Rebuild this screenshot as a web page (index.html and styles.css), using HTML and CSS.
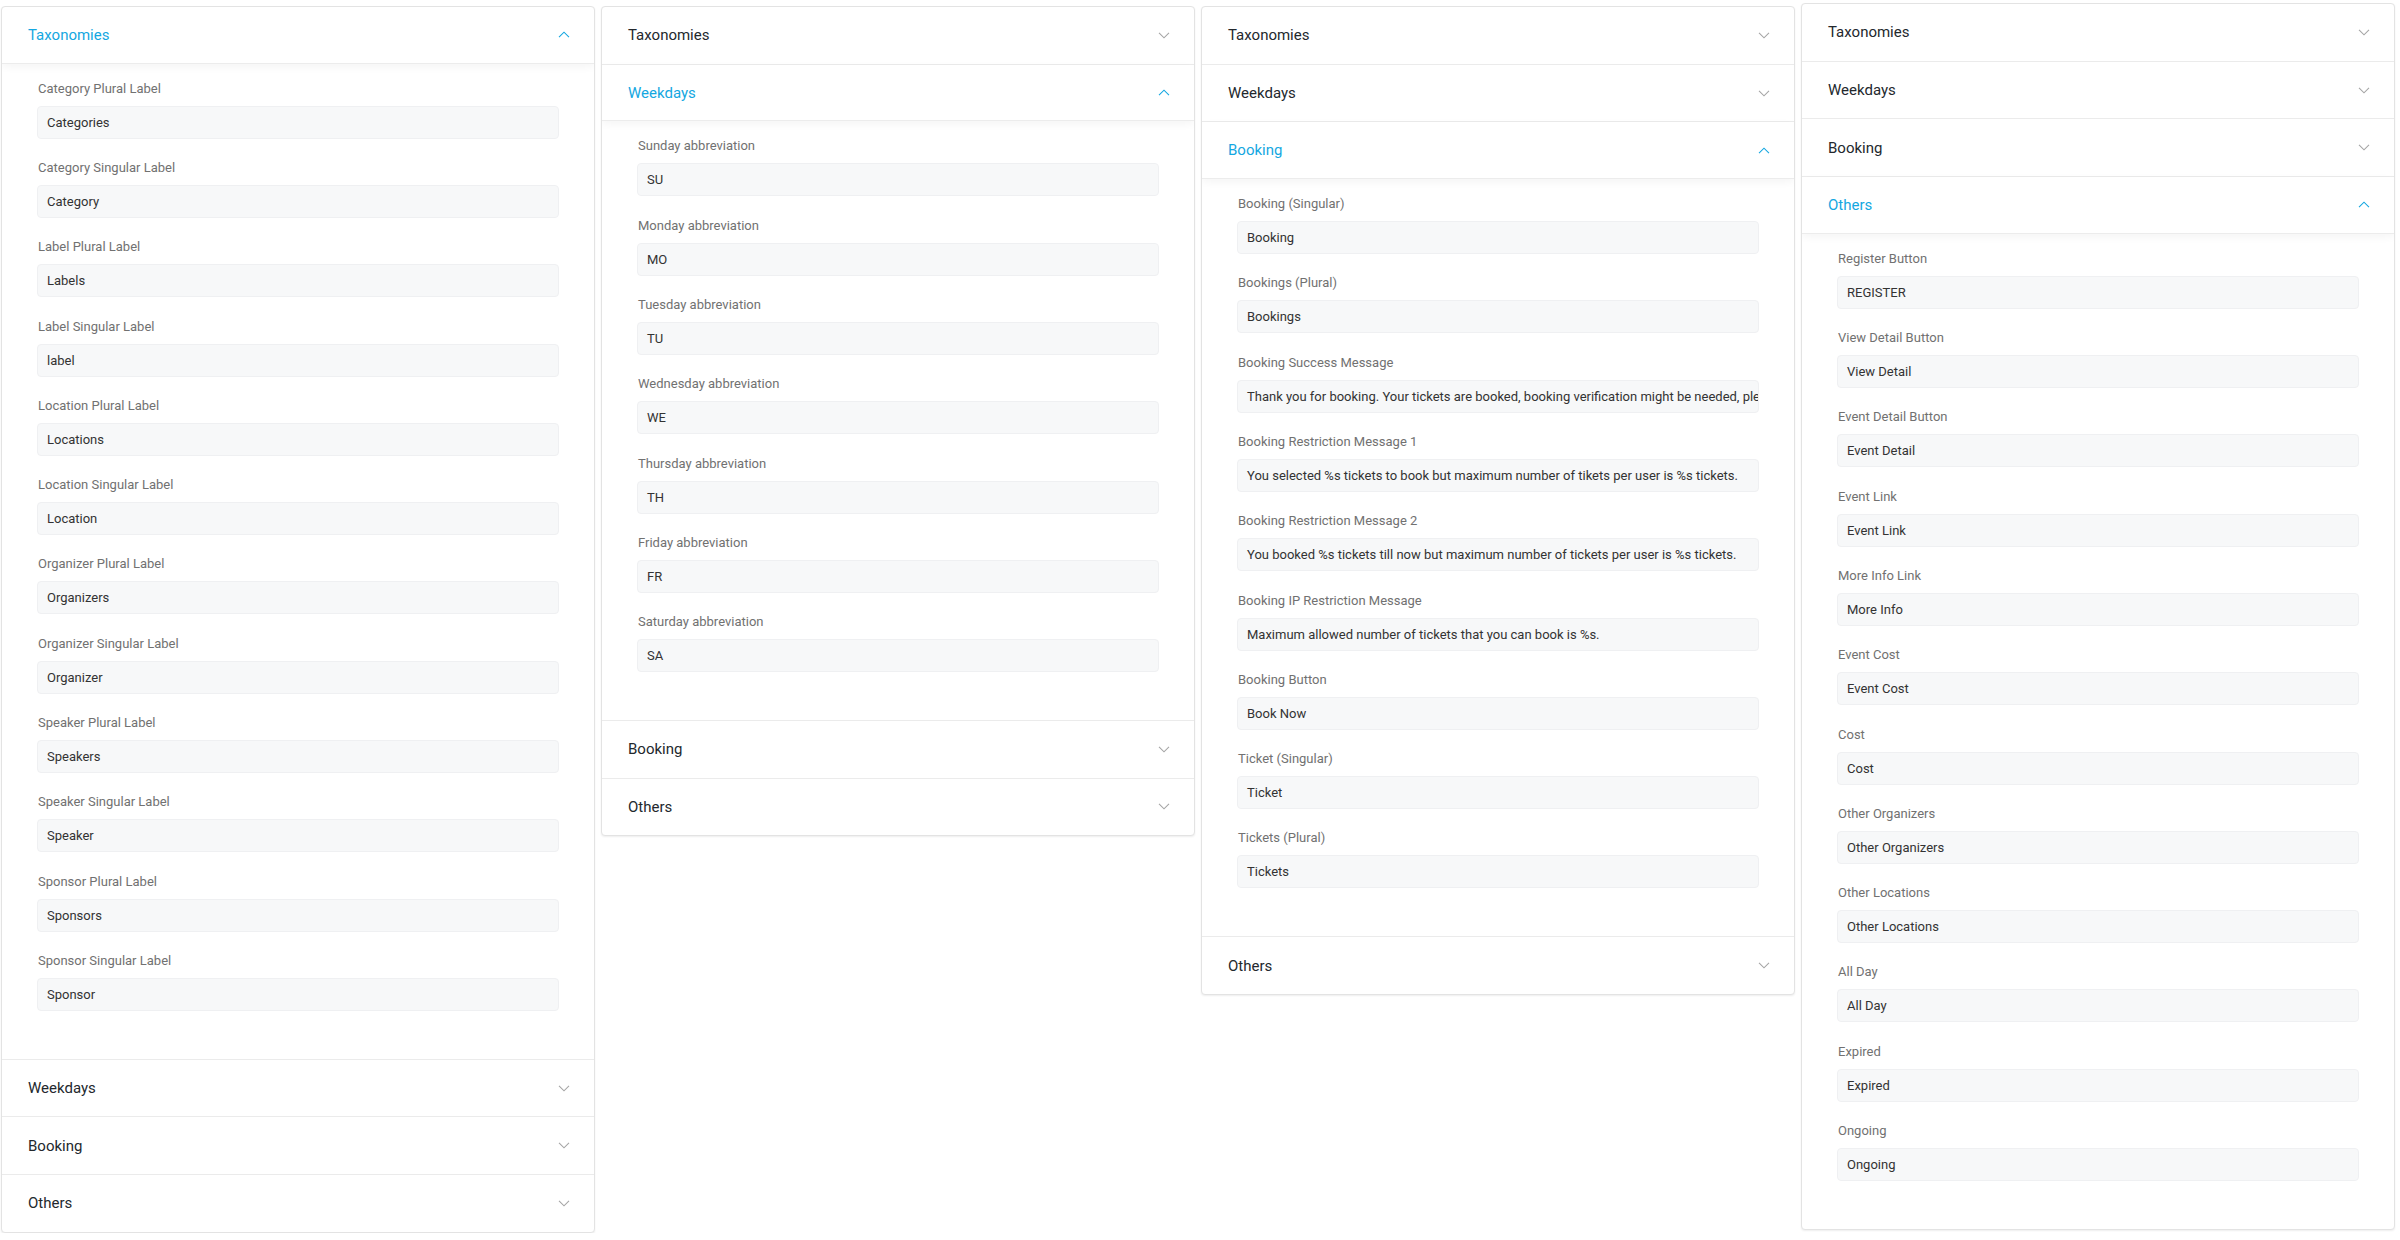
FILE: index.html
```html
<!DOCTYPE html>
<html lang="en">
<head>
<meta charset="utf-8">
<title>Labels settings</title>
<link rel="stylesheet" href="styles.css">
</head>
<body>
<div class="board">

  <!-- Panel 1: Taxonomies open -->
  <section class="acc">
    <div class="acc-item open">
      <div class="acc-head"><span class="acc-title">Taxonomies</span><svg class="chev" viewBox="0 0 12 7"><path d="M1 6.2 L6 1.2 L11 6.2"/></svg></div>
      <div class="acc-body">
        <div class="field"><label class="field-label">Category Plural Label</label><div class="field-input">Categories</div></div>
        <div class="field"><label class="field-label">Category Singular Label</label><div class="field-input">Category</div></div>
        <div class="field"><label class="field-label">Label Plural Label</label><div class="field-input">Labels</div></div>
        <div class="field"><label class="field-label">Label Singular Label</label><div class="field-input">label</div></div>
        <div class="field"><label class="field-label">Location Plural Label</label><div class="field-input">Locations</div></div>
        <div class="field"><label class="field-label">Location Singular Label</label><div class="field-input">Location</div></div>
        <div class="field"><label class="field-label">Organizer Plural Label</label><div class="field-input">Organizers</div></div>
        <div class="field"><label class="field-label">Organizer Singular Label</label><div class="field-input">Organizer</div></div>
        <div class="field"><label class="field-label">Speaker Plural Label</label><div class="field-input">Speakers</div></div>
        <div class="field"><label class="field-label">Speaker Singular Label</label><div class="field-input">Speaker</div></div>
        <div class="field"><label class="field-label">Sponsor Plural Label</label><div class="field-input">Sponsors</div></div>
        <div class="field"><label class="field-label">Sponsor Singular Label</label><div class="field-input">Sponsor</div></div>
      </div>
    </div>
    <div class="acc-item"><div class="acc-head"><span class="acc-title">Weekdays</span><svg class="chev" viewBox="0 0 12 7"><path d="M1 0.8 L6 5.8 L11 0.8"/></svg></div></div>
    <div class="acc-item"><div class="acc-head"><span class="acc-title">Booking</span><svg class="chev" viewBox="0 0 12 7"><path d="M1 0.8 L6 5.8 L11 0.8"/></svg></div></div>
    <div class="acc-item"><div class="acc-head"><span class="acc-title">Others</span><svg class="chev" viewBox="0 0 12 7"><path d="M1 0.8 L6 5.8 L11 0.8"/></svg></div></div>
  </section>

  <!-- Panel 2: Weekdays open -->
  <section class="acc">
    <div class="acc-item"><div class="acc-head"><span class="acc-title">Taxonomies</span><svg class="chev" viewBox="0 0 12 7"><path d="M1 0.8 L6 5.8 L11 0.8"/></svg></div></div>
    <div class="acc-item open">
      <div class="acc-head"><span class="acc-title">Weekdays</span><svg class="chev" viewBox="0 0 12 7"><path d="M1 6.2 L6 1.2 L11 6.2"/></svg></div>
      <div class="acc-body">
        <div class="field"><label class="field-label">Sunday abbreviation</label><div class="field-input">SU</div></div>
        <div class="field"><label class="field-label">Monday abbreviation</label><div class="field-input">MO</div></div>
        <div class="field"><label class="field-label">Tuesday abbreviation</label><div class="field-input">TU</div></div>
        <div class="field"><label class="field-label">Wednesday abbreviation</label><div class="field-input">WE</div></div>
        <div class="field"><label class="field-label">Thursday abbreviation</label><div class="field-input">TH</div></div>
        <div class="field"><label class="field-label">Friday abbreviation</label><div class="field-input">FR</div></div>
        <div class="field"><label class="field-label">Saturday abbreviation</label><div class="field-input">SA</div></div>
      </div>
    </div>
    <div class="acc-item"><div class="acc-head"><span class="acc-title">Booking</span><svg class="chev" viewBox="0 0 12 7"><path d="M1 0.8 L6 5.8 L11 0.8"/></svg></div></div>
    <div class="acc-item"><div class="acc-head"><span class="acc-title">Others</span><svg class="chev" viewBox="0 0 12 7"><path d="M1 0.8 L6 5.8 L11 0.8"/></svg></div></div>
  </section>

  <!-- Panel 3: Booking open -->
  <section class="acc">
    <div class="acc-item"><div class="acc-head"><span class="acc-title">Taxonomies</span><svg class="chev" viewBox="0 0 12 7"><path d="M1 0.8 L6 5.8 L11 0.8"/></svg></div></div>
    <div class="acc-item"><div class="acc-head"><span class="acc-title">Weekdays</span><svg class="chev" viewBox="0 0 12 7"><path d="M1 0.8 L6 5.8 L11 0.8"/></svg></div></div>
    <div class="acc-item open">
      <div class="acc-head"><span class="acc-title">Booking</span><svg class="chev" viewBox="0 0 12 7"><path d="M1 6.2 L6 1.2 L11 6.2"/></svg></div>
      <div class="acc-body">
        <div class="field"><label class="field-label">Booking (Singular)</label><div class="field-input">Booking</div></div>
        <div class="field"><label class="field-label">Bookings (Plural)</label><div class="field-input">Bookings</div></div>
        <div class="field"><label class="field-label">Booking Success Message</label><div class="field-input">Thank you for booking. Your tickets are booked, booking verification might be needed, please check your email.</div></div>
        <div class="field"><label class="field-label">Booking Restriction Message 1</label><div class="field-input">You selected %s tickets to book but maximum number of tikets per user is %s tickets.</div></div>
        <div class="field"><label class="field-label">Booking Restriction Message 2</label><div class="field-input">You booked %s tickets till now but maximum number of tickets per user is %s tickets.</div></div>
        <div class="field"><label class="field-label">Booking IP Restriction Message</label><div class="field-input">Maximum allowed number of tickets that you can book is %s.</div></div>
        <div class="field"><label class="field-label">Booking Button</label><div class="field-input">Book Now</div></div>
        <div class="field"><label class="field-label">Ticket (Singular)</label><div class="field-input">Ticket</div></div>
        <div class="field"><label class="field-label">Tickets (Plural)</label><div class="field-input">Tickets</div></div>
      </div>
    </div>
    <div class="acc-item"><div class="acc-head"><span class="acc-title">Others</span><svg class="chev" viewBox="0 0 12 7"><path d="M1 0.8 L6 5.8 L11 0.8"/></svg></div></div>
  </section>

  <!-- Panel 4: Others open -->
  <section class="acc acc-raised">
    <div class="acc-item"><div class="acc-head"><span class="acc-title">Taxonomies</span><svg class="chev" viewBox="0 0 12 7"><path d="M1 0.8 L6 5.8 L11 0.8"/></svg></div></div>
    <div class="acc-item"><div class="acc-head"><span class="acc-title">Weekdays</span><svg class="chev" viewBox="0 0 12 7"><path d="M1 0.8 L6 5.8 L11 0.8"/></svg></div></div>
    <div class="acc-item"><div class="acc-head"><span class="acc-title">Booking</span><svg class="chev" viewBox="0 0 12 7"><path d="M1 0.8 L6 5.8 L11 0.8"/></svg></div></div>
    <div class="acc-item open">
      <div class="acc-head"><span class="acc-title">Others</span><svg class="chev" viewBox="0 0 12 7"><path d="M1 6.2 L6 1.2 L11 6.2"/></svg></div>
      <div class="acc-body">
        <div class="field"><label class="field-label">Register Button</label><div class="field-input">REGISTER</div></div>
        <div class="field"><label class="field-label">View Detail Button</label><div class="field-input">View Detail</div></div>
        <div class="field"><label class="field-label">Event Detail Button</label><div class="field-input">Event Detail</div></div>
        <div class="field"><label class="field-label">Event Link</label><div class="field-input">Event Link</div></div>
        <div class="field"><label class="field-label">More Info Link</label><div class="field-input">More Info</div></div>
        <div class="field"><label class="field-label">Event Cost</label><div class="field-input">Event Cost</div></div>
        <div class="field"><label class="field-label">Cost</label><div class="field-input">Cost</div></div>
        <div class="field"><label class="field-label">Other Organizers</label><div class="field-input">Other Organizers</div></div>
        <div class="field"><label class="field-label">Other Locations</label><div class="field-input">Other Locations</div></div>
        <div class="field"><label class="field-label">All Day</label><div class="field-input">All Day</div></div>
        <div class="field"><label class="field-label">Expired</label><div class="field-input">Expired</div></div>
        <div class="field"><label class="field-label">Ongoing</label><div class="field-input">Ongoing</div></div>
      </div>
    </div>
  </section>

</div>
</body>
</html>
```

FILE: styles.css
```css
* { box-sizing: border-box; }

html, body {
  margin: 0;
  padding: 0;
  background: #ffffff;
}

body {
  font-family: Roboto, "Liberation Sans", Arial, sans-serif;
  color: #222;
}

.board {
  display: flex;
  align-items: flex-start;
  gap: 6px;
  padding: 3px 0 0 1px;
}

.acc {
  width: 594px;
  flex: 0 0 594px;
  margin-top: 3px;
  background: #fff;
  border: 1px solid #e3e3e3;
  border-radius: 4px;
  box-shadow: 0 1px 2px rgba(0, 0, 0, 0.07);
  overflow: hidden;
}

.acc-raised {
  margin-top: 0;
}

.acc-item {
  border-bottom: 1px solid #ebebeb;
}

.acc-item:last-child {
  border-bottom: none;
}

.acc-head {
  height: 56.7px;
  display: flex;
  align-items: center;
  justify-content: space-between;
  padding: 0 24px 0 26px;
}

.acc-title {
  font-size: 15px;
  color: #23282d;
}

.chev {
  width: 12px;
  height: 7px;
  fill: none;
  stroke: #a5a5a5;
  stroke-width: 1.1;
}

.open .acc-head {
  border-bottom: 1px solid #ececec;
  box-shadow: 0 3px 8px rgba(0, 0, 0, 0.045);
}

.open .acc-title {
  color: #14a7e1;
}

.open .chev {
  stroke: #14a7e1;
}

.acc-body {
  padding: 15px 35px 28.5px 35px;
}

.field {
  margin-bottom: 19.3px;
}

.field-label {
  display: block;
  font-size: 13px;
  line-height: 20px;
  color: #717171;
  padding-left: 1px;
  margin-bottom: 7px;
}

.field-input {
  height: 33px;
  line-height: 31px;
  padding: 0 9px;
  font-size: 13px;
  color: #333;
  background: #f7f8f9;
  border: 1px solid #eff0f2;
  border-radius: 4px;
  white-space: nowrap;
  overflow: hidden;
}
```
